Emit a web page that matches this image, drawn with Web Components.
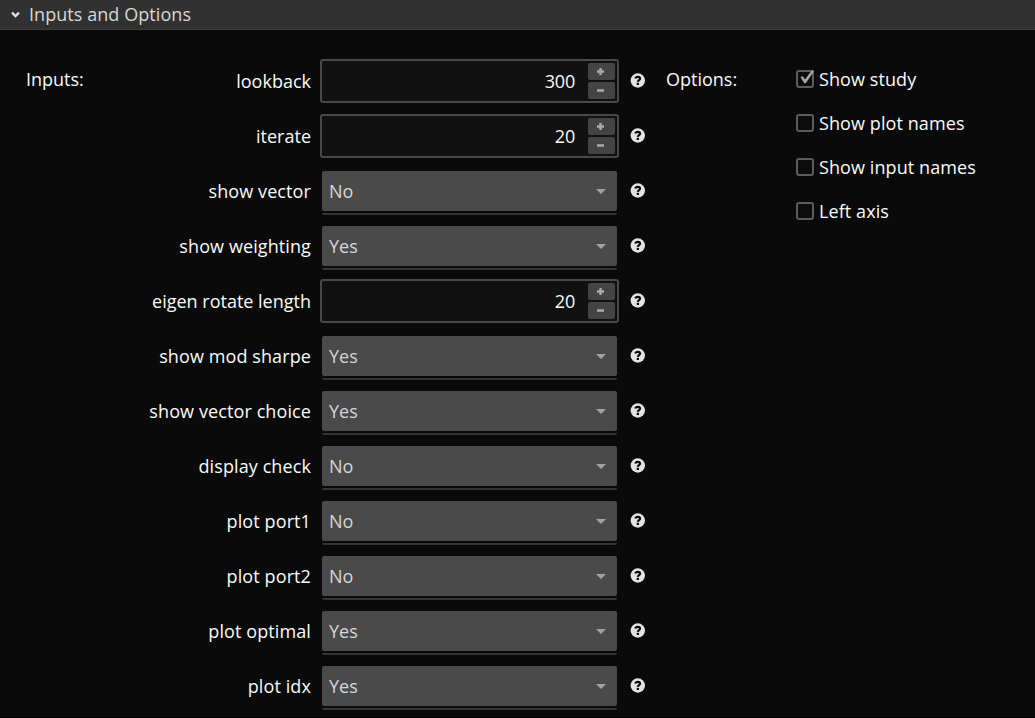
<!DOCTYPE html>
<html lang="en">
<head>
<meta charset="utf-8">
<title>Inputs and Options</title>
<style>
html,body{margin:0;height:100%;background:#0a0a0a;overflow:hidden}
body{font:18px/24px "Open Sans","Noto Sans",sans-serif;color:#fafafa}
</style>
</head>
<body>
<study-panel></study-panel>
<script>
function define(name, html, setup) {
  const template = document.createElement('template');
  template.innerHTML = html;
  customElements.define(name, class extends HTMLElement {
    connectedCallback() {
      if (this.shadowRoot) return;
      const root = this.attachShadow({ mode: 'open' });
      root.append(template.content.cloneNode(true));
      if (setup) setup(this, root);
    }
  });
}

define('panel-header', `
<style>
:host{display:flex;align-items:center;box-sizing:border-box;height:30px;padding:0 0 1px 10px;background:#313131;border-bottom:1px solid #3d3d3d;color:#d8d8d8;letter-spacing:.06px}
svg{width:11px;height:10px;margin-right:8px}
</style>
<svg viewBox="0 0 11 10"><path d="M2 3.6 5.5 7.1 9 3.6" fill="none" stroke="#e2e2e2" stroke-width="2.2"/></svg>
<span><slot></slot></span>`);

define('help-icon', `
<style>:host{display:block;width:15px;height:15px}svg{display:block}</style>
<svg width="15" height="15" viewBox="0 0 15 15"><circle cx="7.8" cy="7.5" r="7.2" fill="#e4e4e4"/>
<path d="M5.3 5.6C5.6 4.3 6.6 3.8 7.8 3.8C9.2 3.8 10.1 4.5 10.1 5.6C10.1 7.1 7.9 7 7.8 8.9" fill="none" stroke="#0a0a0a" stroke-width="2.2"/><rect x="6.7" y="9.8" width="2.3" height="2.2" fill="#0a0a0a"/></svg>`);

define('number-field', `
<style>
:host{display:flex;box-sizing:border-box;width:299px;height:44px;margin-left:-2px;border:2px solid #484848;border-radius:3px;background:#111;padding:2px 2px 2px 0;justify-content:flex-end;align-items:center}
span{margin-right:13px;letter-spacing:-.2px}
div{display:grid;grid-template-rows:17px 17px;gap:2px;width:27px}
svg{display:block;background:#444;border-radius:2px}
</style>
<span><slot></slot></span>
<div><svg width="27" height="17" viewBox="0 0 27 17"><path d="M9 8.5h7M12.5 5v7" stroke="#aaa" stroke-width="2.4"/></svg>
<svg width="27" height="17" viewBox="0 0 27 17"><path d="M9 8.5h7" stroke="#aaa" stroke-width="2.6"/></svg></div>`);

define('select-field', `
<style>
:host{display:block;width:295px;height:44px;margin-top:2px}
.box{display:flex;align-items:center;justify-content:space-between;box-sizing:border-box;height:40px;padding:0 11px 0 7px;background:#4a4a4a;border-radius:2px;color:#d6d6d6}
.line{height:2px;margin-top:2px;background:#343434;border-radius:0 0 2px 2px}
</style>
<div class="box"><span><slot></slot></span><svg width="10" height="6" viewBox="0 0 10 6"><path d="M0 1h10L5 6z" fill="#a2a2a2"/></svg></div>
<div class="line"></div>`);

define('input-row', `
<style>
:host{display:grid;grid-template-columns:201px 295px 15px;column-gap:11px;height:44px}
.label{text-align:right;white-space:nowrap;padding-top:10px;letter-spacing:.1px}
:host([compact]) .label{letter-spacing:0}
help-icon{margin:14px 0 0 2px}
</style>
<div class="label"></div><slot></slot><help-icon></help-icon>`,
(host, root) => { root.querySelector('.label').textContent = host.getAttribute('label'); });

define('check-option', `
<style>
:host{display:flex;align-items:center;height:24px;white-space:nowrap;letter-spacing:.09px}
svg{display:block;margin-right:5px}
.tick{display:none}
:host([checked]) .tick{display:block}
</style>
<svg width="18" height="18" viewBox="0 0 18 18" overflow="visible"><rect x="1" y="1" width="16" height="16" rx="2" fill="#0c0c0c" stroke="#5c5c5c" stroke-width="2"/>
<path class="tick" d="M4.4 7.1 6.8 6.3 9 9.6 16 .3 18.2 .7 9.8 13.2H8.3z" fill="#a8a8a8"/></svg><span><slot></slot></span>`);

define('study-panel', `
<style>
:host{display:block;box-sizing:border-box;height:718px;border-bottom:1px solid #000}
.content{display:grid;grid-template-columns:84px 556px 130px 1fr;padding:29px 0 0 26px}
.caption{padding-top:8px}
.inputs{display:grid;gap:11px}
.options{display:grid;align-content:start;gap:20px;padding-top:8px}
</style>
<panel-header>Inputs and Options</panel-header>
<div class="content">
<div class="caption">Inputs:</div>
<div class="inputs"></div>
<div class="caption">Options:</div>
<div class="options">
<check-option checked>Show study</check-option>
<check-option>Show plot names</check-option>
<check-option>Show input names</check-option>
<check-option>Left axis</check-option>
</div></div>`,
(host, root) => {
  const inputs = [['lookback', 300], ['iterate', 20], ['show vector', 'No'], ['show weighting', 'Yes'],
    ['eigen rotate length', 20], ['show mod sharpe', 'Yes'], ['show vector choice', 'Yes'], ['display check', 'No'],
    ['plot port1', 'No'], ['plot port2', 'No'], ['plot optimal', 'Yes'], ['plot idx', 'Yes']];
  for (const [label, value] of inputs) {
    const row = document.createElement('input-row');
    const numeric = typeof value === 'number';
    row.setAttribute('label', label);
    row.toggleAttribute('compact', numeric);
    const field = document.createElement(numeric ? 'number-field' : 'select-field');
    field.textContent = value;
    row.append(field);
    root.querySelector('.inputs').append(row);
  }
});
</script>
</body>
</html>
